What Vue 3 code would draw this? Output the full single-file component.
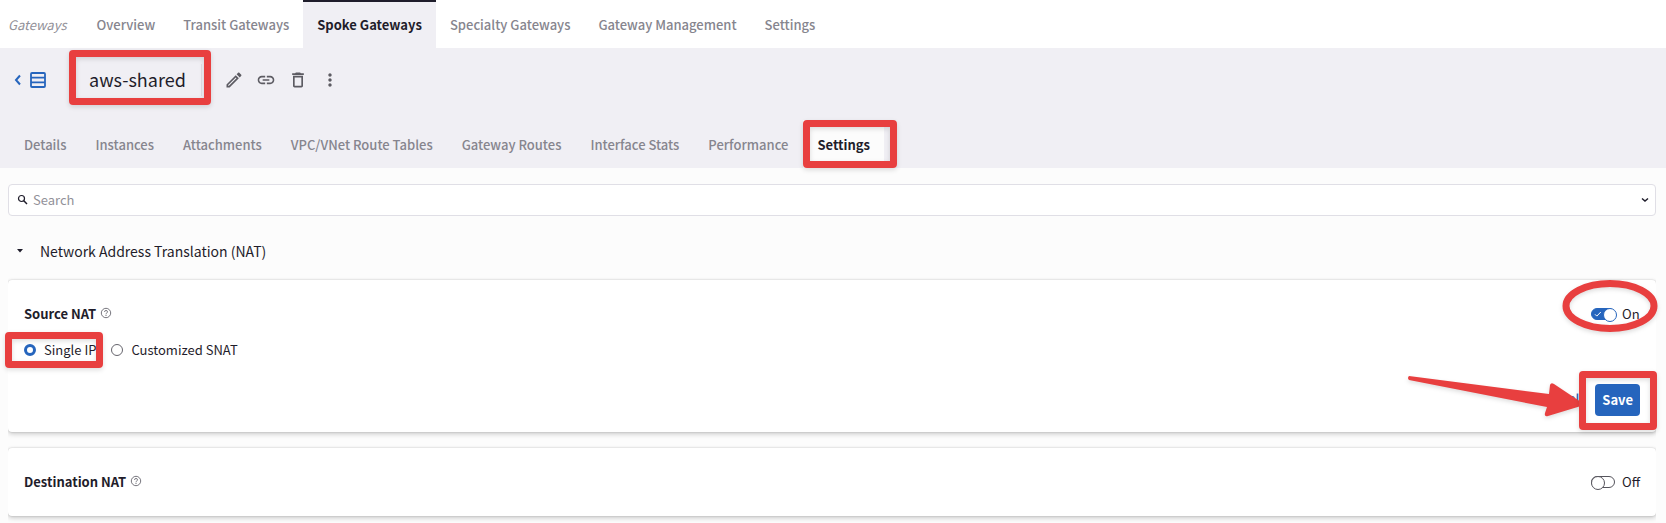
<script setup>
import { ref } from 'vue'

const mainTabs = ['Overview', 'Transit Gateways', 'Spoke Gateways', 'Specialty Gateways', 'Gateway Management', 'Settings']
const detailTabs = ['Details', 'Instances', 'Attachments', 'VPC/VNet Route Tables', 'Gateway Routes', 'Interface Stats', 'Performance', 'Settings']
const mode = ref('single')
const sourceNat = ref(true)
const destinationNat = ref(false)
const search = ref('')
</script>

<template>
  <div class="page">
    <nav class="main-nav" aria-label="Gateways">
      <span class="section">Gateways</span>
      <a v-for="tab in mainTabs" :key="tab" href="#" class="tab" :class="{ active: tab === 'Spoke Gateways' }">{{ tab }}</a>
    </nav>

    <header class="header">
      <div class="title-row">
        <a href="#" class="back" aria-label="Back to list">
          <svg width="8" height="12" viewBox="0 0 8 12"><path d="M6 1.500 2 6l4 4.500" fill="none" stroke="currentColor" stroke-width="2" /></svg>
          <svg width="16" height="16" viewBox="0 0 16 16"><path d="M2 1h12q1 0 1 1v12q0 1-1 1H2q-1 0-1-1V2q0-1 1-1zM1 5.700h14M1 10.300h14" fill="none" stroke="currentColor" stroke-width="1.800" /></svg>
        </a>
        <div class="title mark"><h1>aws-shared</h1></div>
        <div class="actions">
          <button type="button" aria-label="Edit">
            <svg width="20" height="20" viewBox="0 0 24 24"><path d="M14.060 9.020l.92.920L5.920 19H5v-.920l9.060-9.060M17.660 3c-.250 0-.510.100-.700.290l-1.830 1.830 3.750 3.750 1.830-1.830c.390-.390.390-1.020 0-1.410l-2.340-2.340c-.200-.200-.450-.290-.710-.290zm-3.600 3.190L3 17.250V21h3.750L17.810 9.940l-3.750-3.750z" /></svg>
          </button>
          <button type="button" aria-label="Copy link">
            <svg width="20" height="20" viewBox="0 0 24 24"><path d="M3.900 12c0-1.710 1.390-3.100 3.100-3.100h4V7H7c-2.760 0-5 2.240-5 5s2.240 5 5 5h4v-1.900H7c-1.710 0-3.100-1.390-3.100-3.100zM8 13h8v-2H8v2zm9-6h-4v1.900h4c1.710 0 3.100 1.390 3.100 3.100s-1.390 3.100-3.100 3.100h-4V17h4c2.760 0 5-2.240 5-5s-2.240-5-5-5z" /></svg>
          </button>
          <button type="button" aria-label="Delete">
            <svg width="20" height="20" viewBox="0 0 24 24"><path d="M16 9v10H8V9h8m-1.500-6h-5l-1 1H5v2h14V4h-3.500l-1-1zM18 7H6v12c0 1.100.9 2 2 2h8c1.100 0 2-.9 2-2V7z" /></svg>
          </button>
          <button type="button" aria-label="More">
            <svg width="20" height="20" viewBox="0 0 24 24"><path d="M12 8c1.100 0 2-.9 2-2s-.9-2-2-2-2 .9-2 2 .9 2 2 2zm0 2c-1.100 0-2 .9-2 2s.9 2 2 2 2-.9 2-2-.9-2-2-2zm0 6c-1.100 0-2 .9-2 2s.9 2 2 2 2-.9 2-2-.9-2-2-2z" /></svg>
          </button>
        </div>
      </div>
      <nav class="detail-nav" aria-label="Gateway details">
        <a v-for="tab in detailTabs" :key="tab" href="#" class="tab" :class="{ 'current mark': tab === 'Settings' }">{{ tab }}</a>
      </nav>
    </header>

    <main class="content">
      <label class="search">
        <svg width="12" height="12" viewBox="0 0 12 12"><circle cx="4.500" cy="4.500" r="3" fill="none" stroke="currentColor" stroke-width="1.200" /><path d="M6.800 6.800l3.200 3.200" stroke="currentColor" stroke-width="1.500" /></svg>
        <input v-model="search" type="text" placeholder="Search" aria-label="Search" />
        <svg width="8" height="6" viewBox="0 0 8 6"><path d="M1 1.500l3 2.500 3-2.500" fill="none" stroke="currentColor" stroke-width="1.500" /></svg>
      </label>

      <h2 class="group">
        <button type="button" aria-expanded="true">
          <svg width="8" height="4" viewBox="0 0 8 4"><path d="M1 0h6L4 3.600z" fill="currentColor" /></svg>
          Network Address Translation (NAT)
        </button>
      </h2>

      <section class="card">
        <div class="row">
          <h3>Source NAT</h3>
          <svg class="help" width="12" height="12" viewBox="0 0 12 12"><circle cx="6" cy="6" r="4.700" /><path d="M4.500 4.900Q4.500 3.500 6 3.500t1.500 1.300Q7.500 5.600 6.700 6T6 7.300M6 8v1" /></svg>
          <label class="switch">
            <input v-model="sourceNat" type="checkbox" role="switch" aria-label="Source NAT" />
            <span class="track"><svg v-if="sourceNat" width="8" height="8" viewBox="0 0 8 8"><path d="M1 4.300l1.800 1.800L6.800 2" /></svg></span>
            <span class="state">{{ sourceNat ? 'On' : 'Off' }}</span>
            <svg class="ellipse" width="96" height="54" viewBox="0 0 96 54"><ellipse cx="48" cy="27" rx="44" ry="22.500" /></svg>
          </label>
        </div>
        <div class="row radios">
          <label class="mark"><input v-model="mode" type="radio" name="snat" value="single" />Single IP</label>
          <label><input v-model="mode" type="radio" name="snat" value="custom" />Customized SNAT</label>
        </div>
        <div class="buttons">
          <button type="button" class="cancel">Cancel</button>
          <div class="save-wrap mark">
            <button type="button" class="save">Save</button>
            <svg class="arrow" width="180" height="50" viewBox="0 0 180 50"><path d="M7 4l140 18 1-9q1-3 4-1l27 18q3 2 0 4l-33 10q-4 1-3-3l2-6L7 8q-2-2 0-4z" /></svg>
          </div>
        </div>
      </section>

      <section class="card">
        <div class="row">
          <h3>Destination NAT</h3>
          <svg class="help" width="12" height="12" viewBox="0 0 12 12"><circle cx="6" cy="6" r="4.700" /><path d="M4.500 4.900Q4.500 3.500 6 3.500t1.500 1.300Q7.500 5.600 6.700 6T6 7.300M6 8v1" /></svg>
          <label class="switch">
            <input v-model="destinationNat" type="checkbox" role="switch" aria-label="Destination NAT" />
            <span class="track"></span>
            <span class="state">{{ destinationNat ? 'On' : 'Off' }}</span>
          </label>
        </div>
      </section>
    </main>
  </div>
</template>

<style>
body {
  background: #fcfcfc;
}
</style>

<style scoped>
.page {
  --ink: #1f1d2b;
  --blue: #2665bd;
  --red: #e83f3f;
  font: 13px/20px "Noto Sans CJK SC", "Noto Sans", sans-serif;
  color: var(--ink);
  padding-bottom: 7px;
}
.page * {
  box-sizing: border-box;
}
button, input {
  font: inherit;
  color: inherit;
  margin: 0;
}
button {
  border: 0;
  background: none;
  padding: 0;
  cursor: pointer;
}
h1, h2, h3 {
  margin: 0;
}
svg {
  display: block;
  flex: none;
}
.main-nav, .detail-nav {
  display: flex;
  height: 48px;
}
.main-nav {
  background: #fff;
}
.section {
  padding: 15px 16px 13px 8px;
  color: #929199;
  font-style: italic;
}
.tab {
  position: relative;
  padding: 15px 14px 13px;
  color: #86858e;
  font-weight: 500;
  text-decoration: none;
  white-space: nowrap;
}
.tab.active {
  background: #f0eff4;
  color: var(--ink);
  font-weight: 700;
  box-shadow: inset 0 2px var(--ink);
}
.tab.current {
  background: #fcfcfc;
  color: var(--ink);
  font-weight: 700;
}
.header {
  background: #f0eff4;
}
.detail-nav {
  gap: 1px;
  padding-left: 10px;
}
.title-row {
  display: flex;
  align-items: center;
  height: 72px;
  padding: 0 14px 8px;
}
.back {
  display: flex;
  align-items: center;
  gap: 8px;
  color: var(--blue);
}
.title {
  display: flex;
  align-items: center;
  height: 32px;
  margin-left: 28px;
  padding: 0 15px;
  border-right: 1px solid #dfdee5;
}
h1 {
  padding-bottom: 2px;
  font-size: 18px;
  line-height: 28px;
  font-weight: 400;
}
.actions {
  display: flex;
  margin-left: 16px;
}
.actions button {
  display: grid;
  place-items: center;
  width: 32px;
  height: 32px;
}
.actions svg {
  fill: #5c5b62;
}

/* red call-out frames */
.mark {
  position: relative;
}
.mark::after {
  content: "";
  position: absolute;
  inset: 0;
  border: 7px solid var(--red);
  border-radius: 4px;
  box-shadow: 0 2px 5px #0002, inset 0 2px 5px #0002;
  pointer-events: none;
}
.title.mark::after {
  inset: -14px -10px -9px -5px;
}
.current.mark::after {
  inset: 0 -13px 0 0;
}
.radios .mark::after {
  inset: 0 -7px 0 -19px;
}
.save-wrap.mark::after {
  inset: -13px -17px -14px -16px;
}
.ellipse, .arrow {
  position: absolute;
  pointer-events: none;
  filter: drop-shadow(0 2px 2px #0002);
}
.ellipse {
  right: -18px;
  top: -25px;
  fill: none;
  stroke: var(--red);
  stroke-width: 7;
}
.arrow {
  right: 58px;
  top: -12px;
  fill: var(--red);
}

.content {
  display: flex;
  flex-direction: column;
  padding: 16px 10px 0 8px;
}
.search {
  display: flex;
  align-items: center;
  gap: 4px;
  height: 32px;
  padding: 0 6px 0 8px;
  background: #fff;
  border: 1px solid #e0dfe6;
  border-radius: 4px;
}
.search input {
  flex: 1;
  min-width: 0;
  padding: 0;
  border: 0;
  outline: 0;
  background: none;
}
.search input::placeholder {
  color: #929199;
  opacity: 1;
}
.group {
  margin: 23px 0 17px;
  font-size: 14px;
  line-height: 24px;
  font-weight: 400;
}
.group button {
  display: flex;
  align-items: center;
  gap: 16px;
  padding-left: 8px;
}
.card {
  position: relative;
  isolation: isolate;
  padding: 16px;
}
.card::before {
  content: "";
  position: absolute;
  inset: 0;
  z-index: -1;
  background: #fff;
  border-radius: 4px;
  box-shadow: 0 0 2px #0003, 0 2px 5px #0003;
  clip-path: inset(-4px 0 -10px);
}
.card + .card {
  margin-top: 16px;
}
.row {
  display: flex;
  align-items: center;
  height: 36px;
}
h3 {
  font-size: 13px;
  font-weight: 700;
}
.help {
  margin: 0 0 2px 4px;
  fill: none;
  stroke: #77767e;
}
.switch {
  position: relative;
  display: flex;
  align-items: center;
  margin-left: auto;
  cursor: pointer;
}
.switch input {
  position: absolute;
  opacity: 0;
}
.track {
  display: flex;
  align-items: center;
  width: 24px;
  height: 12px;
  padding-left: 2px;
  border: 1px solid #55545c;
  border-radius: 6px;
  position: relative;
}
.track svg {
  fill: none;
  stroke: #fff;
}
.track::after {
  content: "";
  position: absolute;
  left: -1px;
  top: -1px;
  width: 12px;
  height: 12px;
  border: 1px solid #55545c;
  border-radius: 50%;
  background: #fff;
}
input:checked + .track {
  background: var(--blue);
  border-color: var(--blue);
}
input:checked + .track::after {
  left: 11px;
  border-color: var(--blue);
}
.state {
  min-width: 18px;
  margin-left: 7px;
}
.radios {
  gap: 15px;
}
.radios label {
  display: flex;
  align-items: center;
  gap: 8px;
  height: 36px;
}
.radios input {
  appearance: none;
  width: 12px;
  height: 12px;
  border: 1px solid #66656d;
  border-radius: 50%;
  background: #fff;
}
.radios input:checked {
  border: 3px solid var(--blue);
}
.buttons {
  display: flex;
  justify-content: flex-end;
  gap: 16px;
  margin-top: 16px;
}
.cancel {
  padding-bottom: 2px;
  color: var(--blue);
  font-weight: 500;
}
.save {
  height: 32px;
  padding: 0 7px;
  border-radius: 4px;
  background: var(--blue);
  color: #fff;
  font-weight: 700;
}
</style>
